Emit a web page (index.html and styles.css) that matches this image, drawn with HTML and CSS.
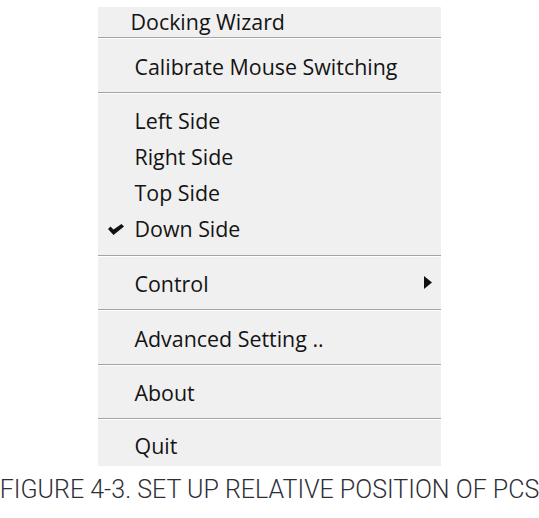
FILE: index.html
```html
<!DOCTYPE html>
<html>
<head>
<meta charset="utf-8">
<link rel="stylesheet" href="styles.css">
</head>
<body>
<div class="page">
  <div class="menu">
    <div class="section first">
      <div class="item top"><span class="label">Docking Wizard</span></div>
    </div>
    <div class="sep"></div>
    <div class="section">
      <div class="item"><span class="gutter"></span><span class="label">Calibrate Mouse Switching</span></div>
    </div>
    <div class="sep"></div>
    <div class="section list">
      <div class="item"><span class="gutter"></span><span class="label">Left Side</span></div>
      <div class="item"><span class="gutter"></span><span class="label">Right Side</span></div>
      <div class="item"><span class="gutter"></span><span class="label">Top Side</span></div>
      <div class="item"><span class="gutter"><svg class="check" width="16" height="11" viewBox="0 0 16 11"><polygon points="0,5 2.5,2.6 5.5,5.6 13.5,0 16,2.4 5.5,11" fill="#111"/></svg></span><span class="label">Down Side</span></div>
    </div>
    <div class="sep"></div>
    <div class="section">
      <div class="item"><span class="gutter"></span><span class="label">Control</span><svg class="arrow" width="8" height="13" viewBox="0 0 8 13"><polygon points="0,0 8,6.5 0,13" fill="#111"/></svg></div>
    </div>
    <div class="sep"></div>
    <div class="section">
      <div class="item"><span class="gutter"></span><span class="label">Advanced Setting ..</span></div>
    </div>
    <div class="sep"></div>
    <div class="section">
      <div class="item"><span class="gutter"></span><span class="label">About</span></div>
    </div>
    <div class="sep"></div>
    <div class="section last">
      <div class="item"><span class="gutter"></span><span class="label">Quit</span></div>
    </div>
  </div>
  <div class="caption">FIGURE 4-3. SET UP RELATIVE POSITION OF PCS</div>
</div>
</body>
</html>
```

FILE: styles.css
```css
html, body {
  margin: 0;
  padding: 0;
  background: #ffffff;
}

.page {
  display: flex;
  flex-direction: column;
  align-items: center;
  padding-top: 7px;
}

.menu {
  width: 343px;
  margin-left: -1px;
  background: #f0f0f0;
  display: flex;
  flex-direction: column;
  font-family: "Open Sans", "Noto Sans", sans-serif;
  font-size: 21.4px;
  color: #141414;
}

.section {
  padding: 9.5px 0 7px;
  display: flex;
  flex-direction: column;
}

.section.list {
  padding-bottom: 7.5px;
}

.section.first {
  padding: 0;
}

.section.last {
  padding: 8px 0 1.5px;
}

.item {
  display: flex;
  align-items: center;
  line-height: 36px;
  height: 36px;
}

.item.top {
  line-height: 30px;
  height: 30px;
  padding-left: 33px;
}

.gutter {
  width: 37px;
  flex: none;
  display: flex;
  align-items: center;
  padding-left: 10px;
  box-sizing: border-box;
}

.check {
  display: block;
  margin-top: 1px;
}

.label {
  white-space: nowrap;
}

.arrow {
  margin-left: auto;
  margin-right: 9px;
  margin-bottom: 3px;
  display: block;
}

.sep {
  height: 1px;
  background: #a4a4a4;
  border-bottom: 1px solid #ffffff;
}

.caption {
  margin-top: 9px;
  font-family: Roboto, "Liberation Sans", sans-serif;
  font-weight: 300;
  font-size: 25px;
  color: #2e2e38;
  white-space: nowrap;
}
```
